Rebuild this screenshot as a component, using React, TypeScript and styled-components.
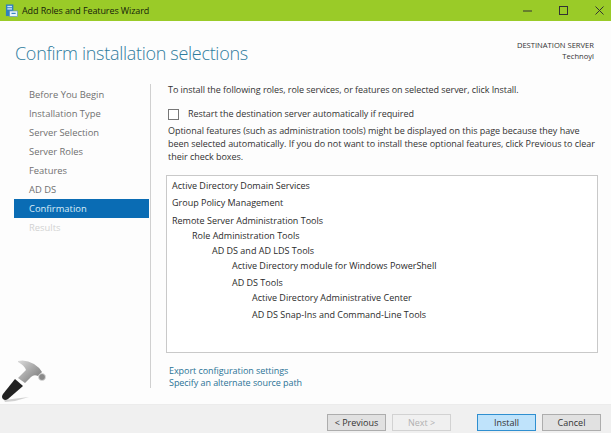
import styled, { createGlobalStyle } from 'styled-components'

const GlobalStyle = createGlobalStyle`
  html, body {
    margin: 0;
    padding: 0;
    background: #fdfdfd;
  }
  body {
    font-family: "Open Sans", "Noto Sans", sans-serif;
    font-size: 9px;
    color: #333;
    overflow: hidden;
  }
`

type NavItem = { text: string; active?: boolean; disabled?: boolean }
type TreeItem = { text: string; level: number; top: number }

const navItems: NavItem[] = [
  { text: 'Before You Begin' },
  { text: 'Installation Type' },
  { text: 'Server Selection' },
  { text: 'Server Roles' },
  { text: 'Features' },
  { text: 'AD DS' },
  { text: 'Confirmation', active: true },
  { text: 'Results', disabled: true },
]

const treeItems: TreeItem[] = [
  { text: 'Active Directory Domain Services', level: 0, top: 0 },
  { text: 'Group Policy Management', level: 0, top: 2 },
  { text: 'Remote Server Administration Tools', level: 0, top: 3 },
  { text: 'Role Administration Tools', level: 1, top: 0 },
  { text: 'AD DS and AD LDS Tools', level: 2, top: 0 },
  { text: 'Active Directory module for Windows PowerShell', level: 3, top: 0 },
  { text: 'AD DS Tools', level: 3, top: 2 },
  { text: 'Active Directory Administrative Center', level: 4, top: 0 },
  { text: 'AD DS Snap-Ins and Command-Line Tools', level: 4, top: 2 },
]

export default function App() {
  return (
    <Window>
      <GlobalStyle />
      <TitleBar>
        <TitleIcon viewBox="0 0 14 14">
          <rect x="1" y="0.5" width="8" height="12.5" fill="#2f7fc1" />
          <rect x="2.5" y="2" width="5" height="1.5" fill="#cfe6f7" />
          <rect x="2.5" y="4.5" width="5" height="1.5" fill="#cfe6f7" />
          <rect x="5" y="7.5" width="8.5" height="6" fill="#e9f3fa" stroke="#5b93bd" strokeWidth="0.7" />
          <rect x="7" y="9.5" width="4.5" height="1.2" fill="#2f7fc1" />
        </TitleIcon>
        <TitleText>Add Roles and Features Wizard</TitleText>
        <WindowControls>
          <svg width="9" height="9" viewBox="0 0 9 9">
            <path d="M0 5h9" stroke="#333" strokeWidth="1" />
          </svg>
          <svg width="9" height="9" viewBox="0 0 9 9">
            <rect x="0.5" y="0.5" width="8" height="8" fill="none" stroke="#333" strokeWidth="1" />
          </svg>
          <svg width="9" height="9" viewBox="0 0 9 9">
            <path d="M0.5 0.5l8 8M8.5 0.5l-8 8" stroke="#333" strokeWidth="1" />
          </svg>
        </WindowControls>
      </TitleBar>

      <Header>
        <PageTitle>Confirm installation selections</PageTitle>
        <Destination>
          <div>DESTINATION SERVER</div>
          <div>Technoyl</div>
        </Destination>
      </Header>

      <Main>
        <Nav>
          {navItems.map((item) => (
            <NavRow key={item.text} $active={item.active} $disabled={item.disabled}>
              {item.text}
            </NavRow>
          ))}
        </Nav>
        <Content>
          <Intro>To install the following roles, role services, or features on selected server, click Install.</Intro>
          <CheckRow>
            <CheckBox />
            <span>Restart the destination server automatically if required</span>
          </CheckRow>
          <Paragraph>
            Optional features (such as administration tools) might be displayed on this page because they have
            <br />
            been selected automatically. If you do not want to install these optional features, click Previous to clear
            <br />
            their check boxes.
          </Paragraph>
          <TreeBox>
            {treeItems.map((item) => (
              <TreeRow key={item.text} $level={item.level} $top={item.top}>
                {item.text}
              </TreeRow>
            ))}
          </TreeBox>
          <Links>
            <LinkText>Export configuration settings</LinkText>
            <LinkText>Specify an alternate source path</LinkText>
          </Links>
        </Content>
      </Main>

      <Footer>
        <FooterButton>&lt; Previous</FooterButton>
        <FooterButton $disabled>Next &gt;</FooterButton>
        <FooterButton $primary>Install</FooterButton>
        <FooterButton>Cancel</FooterButton>
      </Footer>

      <Hammer viewBox="0 0 46 46">
        <defs>
          <linearGradient id="head" x1="0" y1="0" x2="1" y2="1">
            <stop offset="0" stopColor="#dcdcdc" />
            <stop offset="0.55" stopColor="#a0a0a0" />
            <stop offset="1" stopColor="#707070" />
          </linearGradient>
        </defs>
        <path d="M3 41 L28 38 L14 42 L4 43 Z" fill="#bdbdbd" opacity="0.7" />
        <path d="M14 20 L22 27 L7 40 Q4 42 2 40 Q0 38 2 35 Z" fill="#222" />
        <path d="M17 2 Q25 0 33 5 Q38 8 41 13 L37 17 Q33 15 30 18 L24 24 L17 19 L25 11 Q23 6 17 3 Z" fill="url(#head)" />
        <circle cx="41" cy="18" r="3.5" fill="#8a8a8a" stroke="#dcdcdc" strokeWidth="0.8" />
      </Hammer>
    </Window>
  )
}

const Window = styled.div`
  position: relative;
  width: 611px;
  height: 433px;
  display: flex;
  flex-direction: column;
  overflow: hidden;
`

const TitleBar = styled.div`
  height: 21px;
  flex: none;
  display: flex;
  align-items: center;
  padding-left: 5px;
  background: #9acb28;
`

const TitleIcon = styled.svg`
  width: 13px;
  height: 13px;
  margin-right: 4px;
`

const TitleText = styled.div`
  font-size: 9px;
  letter-spacing: -0.1px;
  color: #16220a;
`

const WindowControls = styled.div`
  margin-left: auto;
  margin-right: 7px;
  display: flex;
  align-items: center;
  gap: 27px;
`

const Header = styled.div`
  height: 63px;
  flex: none;
  display: flex;
  justify-content: space-between;
  padding: 18px 17px 0 15px;
  box-sizing: border-box;
`

const PageTitle = styled.div`
  font-size: 18px;
  font-weight: 300;
  letter-spacing: -0.3px;
  line-height: 28px;
  color: #2f7c9e;
`

const Destination = styled.div`
  font-size: 7.6px;
  line-height: 11px;
  text-align: right;
  color: #333;
  padding-top: 1px;
`

const Main = styled.div`
  flex: 1;
  display: flex;
  min-height: 0;
  padding-bottom: 16px;
`

const Nav = styled.div`
  width: 136px;
  margin-left: 14px;
  flex: none;
  padding-top: 1px;
  border-right: 1px solid #d0d0d0;
`

const NavRow = styled.div<{ $active?: boolean; $disabled?: boolean }>`
  height: 19px;
  width: 135px;
  line-height: 19px;
  padding-left: 15px;
  box-sizing: border-box;
  font-size: 9.4px;
  background: ${({ $active }) => ($active ? '#0a6cb4' : 'transparent')};
  color: ${({ $active, $disabled }) => ($active ? '#d9ecf8' : $disabled ? '#d2d2d2' : '#707070')};
`

const Content = styled.div`
  flex: 1;
  min-width: 0;
  padding: 0 13px 0 15px;
  display: flex;
  flex-direction: column;
`

const Intro = styled.div`
  line-height: 12px;
  margin-left: 2px;
  letter-spacing: -0.06px;
`

const CheckRow = styled.div`
  display: flex;
  align-items: center;
  margin: 12px 0 0 2px;
  line-height: 12px;
  letter-spacing: -0.06px;
`

const CheckBox = styled.span`
  width: 9px;
  height: 9px;
  border: 1px solid #777;
  background: #fff;
  margin-right: 9px;
`

const Paragraph = styled.div`
  line-height: 13px;
  margin: 4px 0 0 2px;
  white-space: nowrap;
  letter-spacing: -0.03px;
`

const TreeBox = styled.div`
  height: 178px;
  flex: none;
  box-sizing: border-box;
  margin-top: 12px;
  padding-top: 2px;
  background: #fff;
  border: 1px solid #c9c9c9;
`

const TreeRow = styled.div<{ $level: number; $top: number }>`
  line-height: 15px;
  margin-top: ${({ $top }) => $top}px;
  padding-left: ${({ $level }) => 5 + $level * 20}px;
  color: #2b2b2b;
`

const Links = styled.div`
  margin: 12px 0 0 3px;
`

const LinkText = styled.div`
  line-height: 12px;
  letter-spacing: -0.06px;
  color: #2b7396;
`

const Footer = styled.div`
  height: 29px;
  flex: none;
  box-sizing: border-box;
  padding: 9px 10px 3px 0;
  display: flex;
  justify-content: flex-end;
  background: #f0f0f0;
  border-top: 1px solid #ececec;
`

const FooterButton = styled.div<{ $primary?: boolean; $disabled?: boolean }>`
  width: 59px;
  height: 17px;
  box-sizing: border-box;
  text-align: center;
  line-height: 15px;
  margin-left: ${({ $disabled }) => ($disabled ? '6px' : '0')};
  font-size: 9px;
  color: ${({ $disabled }) => ($disabled ? '#b0b0b0' : '#333')};
  background: ${({ $primary, $disabled }) => ($primary ? '#bfe3fb' : $disabled ? '#f0f0f0' : '#e1e1e1')};
  border: 1px solid ${({ $primary, $disabled }) => ($primary ? '#2f8fd0' : $disabled ? '#d2d2d2' : '#adadad')};
  &:nth-child(3) {
    margin-left: 26px;
  }
  &:nth-child(4) {
    margin-left: 6px;
  }
`

const Hammer = styled.svg`
  position: absolute;
  left: 1px;
  top: 359px;
  width: 46px;
  height: 46px;
`
